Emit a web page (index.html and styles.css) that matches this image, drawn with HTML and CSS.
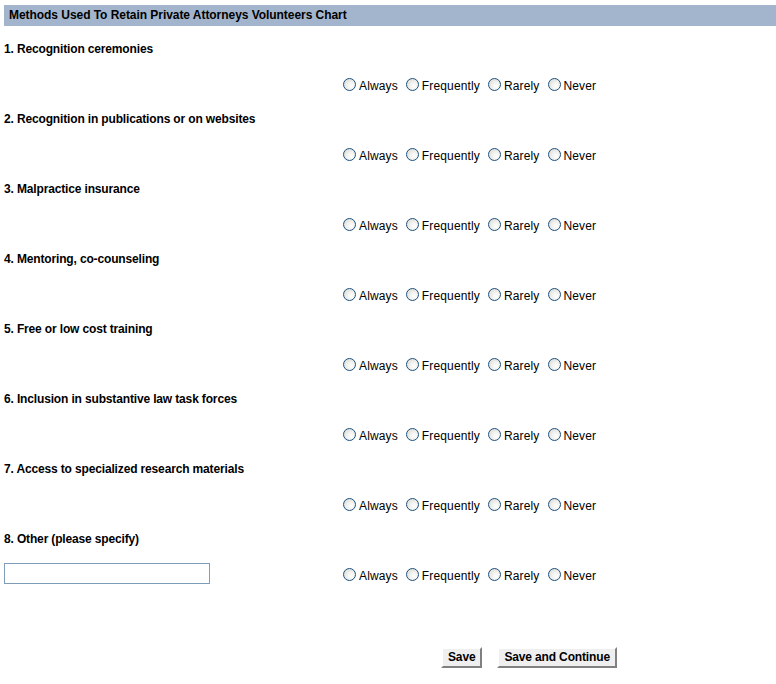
FILE: index.html
```html
<!DOCTYPE html>
<html>
<head>
<meta charset="utf-8">
<link rel="stylesheet" href="styles.css">
</head>
<body>
<div class="page">
  <div class="header">Methods Used To Retain Private Attorneys Volunteers Chart</div>
  <div class="questions">
    <div class="q">
      <div class="q-title">1. Recognition ceremonies</div>
      <div class="q-row"><div class="q-left"></div><div class="opts">
        <label class="opt"><input type="radio" name="q1"><span>Always</span></label>
        <label class="opt"><input type="radio" name="q1"><span>Frequently</span></label>
        <label class="opt"><input type="radio" name="q1"><span>Rarely</span></label>
        <label class="opt"><input type="radio" name="q1"><span>Never</span></label>
      </div></div>
    </div>
    <div class="q">
      <div class="q-title">2. Recognition in publications or on websites</div>
      <div class="q-row"><div class="q-left"></div><div class="opts">
        <label class="opt"><input type="radio" name="q2"><span>Always</span></label>
        <label class="opt"><input type="radio" name="q2"><span>Frequently</span></label>
        <label class="opt"><input type="radio" name="q2"><span>Rarely</span></label>
        <label class="opt"><input type="radio" name="q2"><span>Never</span></label>
      </div></div>
    </div>
    <div class="q">
      <div class="q-title">3. Malpractice insurance</div>
      <div class="q-row"><div class="q-left"></div><div class="opts">
        <label class="opt"><input type="radio" name="q3"><span>Always</span></label>
        <label class="opt"><input type="radio" name="q3"><span>Frequently</span></label>
        <label class="opt"><input type="radio" name="q3"><span>Rarely</span></label>
        <label class="opt"><input type="radio" name="q3"><span>Never</span></label>
      </div></div>
    </div>
    <div class="q">
      <div class="q-title">4. Mentoring, co-counseling</div>
      <div class="q-row"><div class="q-left"></div><div class="opts">
        <label class="opt"><input type="radio" name="q4"><span>Always</span></label>
        <label class="opt"><input type="radio" name="q4"><span>Frequently</span></label>
        <label class="opt"><input type="radio" name="q4"><span>Rarely</span></label>
        <label class="opt"><input type="radio" name="q4"><span>Never</span></label>
      </div></div>
    </div>
    <div class="q">
      <div class="q-title">5. Free or low cost training</div>
      <div class="q-row"><div class="q-left"></div><div class="opts">
        <label class="opt"><input type="radio" name="q5"><span>Always</span></label>
        <label class="opt"><input type="radio" name="q5"><span>Frequently</span></label>
        <label class="opt"><input type="radio" name="q5"><span>Rarely</span></label>
        <label class="opt"><input type="radio" name="q5"><span>Never</span></label>
      </div></div>
    </div>
    <div class="q">
      <div class="q-title">6. Inclusion in substantive law task forces</div>
      <div class="q-row"><div class="q-left"></div><div class="opts">
        <label class="opt"><input type="radio" name="q6"><span>Always</span></label>
        <label class="opt"><input type="radio" name="q6"><span>Frequently</span></label>
        <label class="opt"><input type="radio" name="q6"><span>Rarely</span></label>
        <label class="opt"><input type="radio" name="q6"><span>Never</span></label>
      </div></div>
    </div>
    <div class="q">
      <div class="q-title">7. Access to specialized research materials</div>
      <div class="q-row"><div class="q-left"></div><div class="opts">
        <label class="opt"><input type="radio" name="q7"><span>Always</span></label>
        <label class="opt"><input type="radio" name="q7"><span>Frequently</span></label>
        <label class="opt"><input type="radio" name="q7"><span>Rarely</span></label>
        <label class="opt"><input type="radio" name="q7"><span>Never</span></label>
      </div></div>
    </div>
    <div class="q">
      <div class="q-title">8. Other (please specify)</div>
      <div class="q-row"><div class="q-left"><input type="text" class="other"></div><div class="opts">
        <label class="opt"><input type="radio" name="q8"><span>Always</span></label>
        <label class="opt"><input type="radio" name="q8"><span>Frequently</span></label>
        <label class="opt"><input type="radio" name="q8"><span>Rarely</span></label>
        <label class="opt"><input type="radio" name="q8"><span>Never</span></label>
      </div></div>
    </div>
  </div>
  <div class="actions">
    <button class="btn">Save</button>
    <button class="btn">Save and Continue</button>
  </div>
</div>
</body>
</html>
```

FILE: styles.css
```css
html, body {
  margin: 0;
  padding: 0;
  background: #ffffff;
}
body {
  font-family: "Liberation Sans", Arial, sans-serif;
  font-size: 12px;
  color: #000000;
}
.page {
  padding: 5px 0 0 4px;
}
.header {
  background: #a3b5cc;
  height: 21px;
  line-height: 21px;
  padding-left: 5px;
  font-weight: bold;
  font-size: 12px;
  letter-spacing: -0.05px;
}
.questions {
  display: flex;
  flex-direction: column;
  padding-top: 15px;
}
.q {
  height: 70px;
  display: flex;
  flex-direction: column;
}
.q-title {
  font-weight: bold;
  line-height: 16px;
  height: 16px;
  letter-spacing: -0.15px;
}
.q-row {
  display: flex;
  align-items: center;
  margin-top: 16px;
  height: 24px;
}
.q-left {
  width: 339px;
  flex: none;
  display: flex;
  align-items: center;
}
.opts {
  display: flex;
  align-items: center;
  gap: 8px;
}
.opt {
  display: flex;
  align-items: center;
  gap: 3px;
}
.opt input[type="radio"] {
  appearance: none;
  -webkit-appearance: none;
  margin: 0;
  width: 13px;
  height: 13px;
  border-radius: 50%;
  border: 1px solid #1c5180;
  background: radial-gradient(circle at 65% 65%, #ffffff 0%, #f1f1ee 40%, #d6d5cc 100%);
  box-sizing: border-box;
  position: relative;
  top: -1px;
}
.opt span {
  line-height: 14px;
  position: relative;
  top: 1px;
  letter-spacing: 0.14px;
}
.other {
  width: 206px;
  height: 21px;
  box-sizing: border-box;
  border: 1px solid #7f9db9;
  margin: 0 0 4px 0;
  padding: 2px;
  font-family: inherit;
  font-size: 12px;
}
.actions {
  display: flex;
  gap: 15px;
  padding-left: 437px;
  padding-top: 46px;
}
.btn {
  font-family: "Liberation Sans", Arial, sans-serif;
  font-weight: bold;
  font-size: 12px;
  letter-spacing: -0.15px;
  background: #efefef;
  border: 2px solid #808080;
  border-top-color: #ffffff;
  border-left-color: #ffffff;
  height: 21px;
  padding: 0 5px;
  margin: 0;
  line-height: 17px;
  color: #000;
}
```
